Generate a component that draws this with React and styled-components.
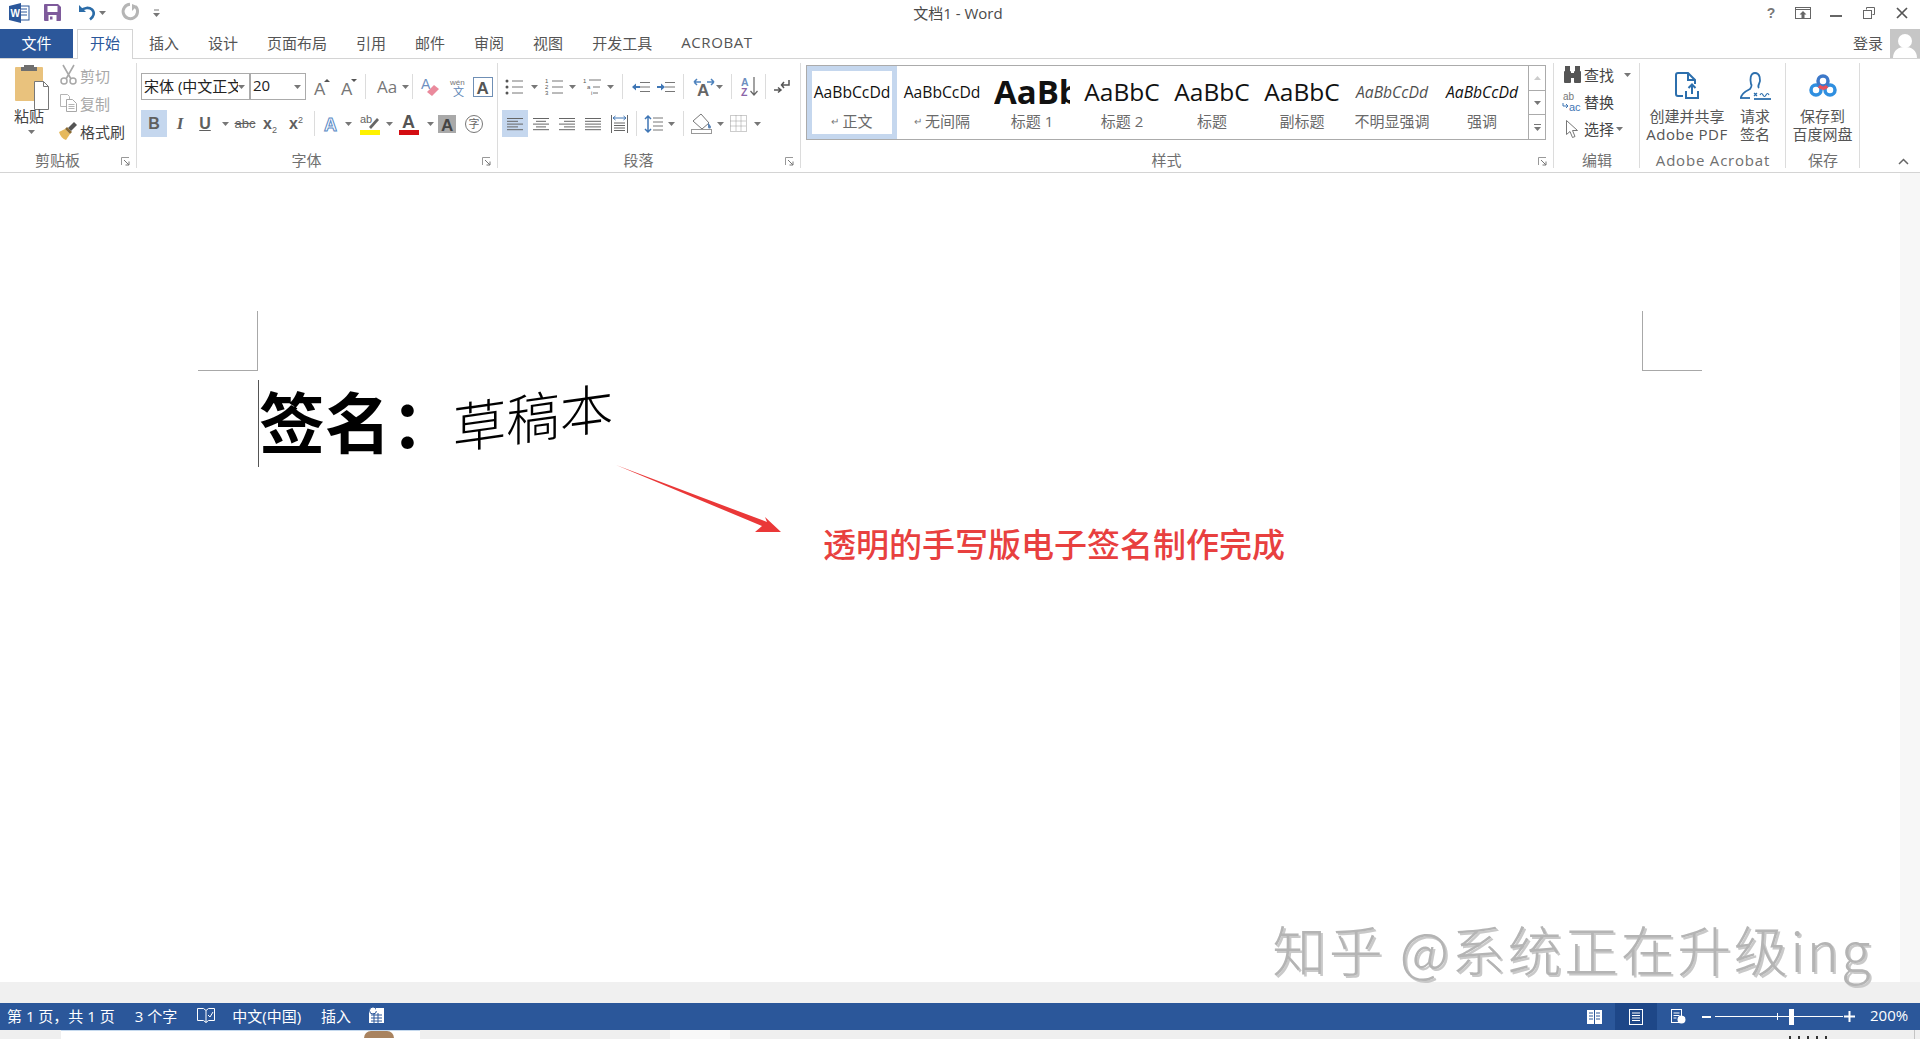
import React from 'react'
import styled, { createGlobalStyle } from 'styled-components'

const UI_FONT = '"Open Sans", "Noto Sans CJK SC", sans-serif'
const CJK_FONT = '"Noto Sans CJK SC", sans-serif'

const Global = createGlobalStyle`
 html, body {
  margin: 0;
  padding: 0;
  background: #fff;
 }
 body {
  font-family: ${UI_FONT};
  color: #444;
  overflow: hidden;
 }
`

const Window = styled.div`
 width: 1920px;
 height: 1039px;
 display: flex;
 flex-direction: column;
 overflow: hidden;
`

const TitleBar = styled.div`
 height: 29px;
 flex: none;
 box-sizing: border-box;
 padding-bottom: 4px;
 display: grid;
 grid-template-columns: 1fr auto 1fr;
 align-items: center;
`

const QuickAccess = styled.div`
 display: flex;
 align-items: center;
 height: 100%;
 padding-left: 7px;
`

const Title = styled.div`
 font-size: 15px;
 color: #4a4a4a;
 padding-right: 4px;
`

const WindowButtons = styled.div`
 display: flex;
 justify-content: flex-end;
 align-items: center;
 height: 100%;
 padding-right: 1px;
`

const TabBar = styled.div`
 height: 30px;
 flex: none;
 box-sizing: border-box;
 display: flex;
 border-bottom: 1px solid #d4d4d4;
`

const FileTab = styled.div`
 width: 73px;
 height: 29px;
 box-sizing: border-box;
 padding-bottom: 3px;
 margin-right: 4px;
 background: #2b579a;
 color: #fff;
 font-size: 15px;
 display: flex;
 align-items: center;
 justify-content: center;
`

const Tab = styled.div`
 height: ${(p) => (p.$active ? '30px' : '29px')};
 box-sizing: border-box;
 padding: 0 ${(p) => (p.$active ? '12px' : '14.5px')} ${(p) => (p.$active ? '4px' : '3px')};
 margin-right: ${(p) => (p.$active ? '1.5px' : '0')};
 font-size: 15px;
 color: ${(p) => (p.$active ? '#2b579a' : '#555')};
 background: #fff;
 border: ${(p) => (p.$active ? '1px solid #d4d4d4' : 'none')};
 border-bottom: none;
 display: flex;
 align-items: center;
 letter-spacing: ${(p) => p.$track || 0}px;
`

const Account = styled.div`
 margin-left: auto;
 display: flex;
 align-items: center;
 gap: 7px;
 font-size: 15px;
 color: #555;
`

const AccountName = styled.span`
 padding-bottom: 3px;
`

const Avatar = styled.div`
 width: 30px;
 height: 29px;
 background: #c6c6c6;
 overflow: hidden;
`

const Ribbon = styled.div`
 height: 114px;
 flex: none;
 box-sizing: border-box;
 display: flex;
 border-bottom: 1px solid #d4d4d4;
`

const Group = styled.div`
 position: relative;
 width: ${(p) => p.$w}px;
 flex: none;
 display: flex;
 flex-direction: column;
 &::after {
  content: '';
  position: absolute;
  right: 0;
  top: 4px;
  bottom: 4px;
  width: 1px;
  background: #dcdcdc;
 }
`

const GroupBody = styled.div`
 height: 92px;
 flex: none;
 box-sizing: border-box;
 display: flex;
 flex-direction: ${(p) => p.$dir || 'row'};
 gap: ${(p) => p.$gap || 0}px;
 padding: ${(p) => p.$pad || '0'};
`

const GroupLabel = styled.div`
 height: 20px;
 line-height: 19px;
 text-align: center;
 font-size: 15px;
 color: #707070;
 padding-right: ${(p) => (p.$launch ? 22 : 0)}px;
 letter-spacing: ${(p) => p.$track || 0}px;
`

const Launcher = styled.svg`
 position: absolute;
 right: 7px;
 bottom: 6px;
`

const PasteColumn = styled.div`
 width: 56px;
 flex: none;
 display: flex;
 flex-direction: column;
 align-items: flex-start;
 padding: 5px 0 0 15px;
 box-sizing: border-box;
`

const PasteLabel = styled.div`
 font-size: 15px;
 line-height: 20px;
 margin: -4px 0 0 -1px;
 color: #444;
`

const PasteCaret = styled.div`
 margin: 4px 0 0 13px;
 display: flex;
`

const SmallColumn = styled.div`
 display: flex;
 flex-direction: column;
 padding-top: ${(p) => p.$top || 0}px;
`

const SmallRow = styled.div`
 height: ${(p) => p.$h || 28}px;
 display: flex;
 align-items: center;
 font-size: 15px;
 color: ${(p) => (p.$off ? '#a8a8a8' : '#444')};
`

const SmallIcon = styled.div`
 width: ${(p) => p.$w}px;
 flex: none;
 display: flex;
 align-items: center;
 justify-content: center;
`

const ToolRow = styled.div`
 height: 27px;
 display: flex;
 align-items: stretch;
`

const Tool = styled.div`
 width: ${(p) => p.$w}px;
 margin-left: ${(p) => p.$ml || 0}px;
 flex: none;
 display: flex;
 align-items: center;
 justify-content: center;
 background: ${(p) => (p.$on ? '#c5d7ee' : 'transparent')};
`

const Select = styled.div`
 width: ${(p) => p.$w}px;
 margin-left: ${(p) => p.$ml || 0}px;
 box-sizing: border-box;
 flex: none;
 display: flex;
 align-items: center;
 justify-content: space-between;
 border: 1px solid #ababab;
 padding: 0 4px 0 2px;
 font-size: 15px;
 color: #222;
 overflow: hidden;
`

const SelectText = styled.span`
 white-space: nowrap;
 overflow: hidden;
 flex: 1;
 padding-bottom: 3px;
`

const Sep = styled.div`
 width: 1px;
 flex: none;
 margin: 1px 0 1px ${(p) => p.$ml || 0}px;
 background: #dcdcdc;
`

const Glyph = styled.span`
 font-family: ${(p) => p.$font || '"Liberation Sans", sans-serif'};
 font-size: ${(p) => p.$size || 16}px;
 font-weight: ${(p) => p.$weight || 400};
 font-style: ${(p) => p.$italic ? 'italic' : 'normal'};
 text-decoration: ${(p) => p.$deco || 'none'};
 color: ${(p) => p.$color || '#5f5f5f'};
 line-height: 1;
 sub, sup {
  font-size: 9px;
  font-weight: 400;
  line-height: 0;
 }
`

const Icon = styled.svg`
 display: block;
 flex: none;
 overflow: visible;
 text {
  font-family: "Liberation Sans", "Noto Sans CJK SC", sans-serif;
 }
`

const Gallery = styled.div`
 height: 75px;
 margin: 6px 0 0 5px;
 width: 722px;
 box-sizing: border-box;
 display: flex;
 border: 1px solid #ababab;
 border-right: none;
`

const StyleItem = styled.div`
 width: 90px;
 flex: none;
 box-sizing: border-box;
 overflow: hidden;
 display: flex;
 flex-direction: column;
 align-items: center;
 border: 5px solid ${(p) => (p.$active ? '#c5d7ee' : 'transparent')};
`

const StylePreview = styled.div`
 height: 41px;
 width: ${(p) => (p.$clip ? '76px' : '80px')};
 overflow: hidden;
 display: flex;
 align-items: center;
 justify-content: ${(p) => (p.$clip ? 'flex-start' : 'center')};
 white-space: nowrap;
 color: #111;
 font-size: ${(p) => p.$size}px;
 font-weight: ${(p) => p.$weight || 400};
 font-style: ${(p) => (p.$italic ? 'italic' : 'normal')};
 opacity: ${(p) => p.$dim || 1};
`

const StyleName = styled.div`
 font-size: 15px;
 color: #6a6a6a;
 line-height: 18px;
 white-space: nowrap;
 display: flex;
 align-items: center;
 gap: 3px;
`

const ReturnMark = styled.span`
 font-size: 10px;
 color: #777;
`

const GalleryScroll = styled.div`
 width: 18px;
 flex: none;
 display: flex;
 flex-direction: column;
 border: 1px solid #ababab;
 box-sizing: border-box;
 margin-top: 6px;
 height: 75px;
`

const ScrollCell = styled.div`
 flex: 1;
 display: flex;
 align-items: center;
 justify-content: center;
 border-top: ${(p) => (p.$first ? 'none' : '1px solid #ababab')};
`

const GalleryWrap = styled.div`
 display: flex;
`

const LargeButton = styled.div`
 width: ${(p) => p.$w}px;
 flex: none;
 box-sizing: border-box;
 padding-top: 12px;
 display: flex;
 flex-direction: column;
 align-items: center;
`

const LargeIcon = styled.div`
 height: 30px;
 margin-bottom: 6px;
 display: flex;
 align-items: center;
`

const LargeLine = styled.div`
 font-size: 15px;
 line-height: 18px;
 color: #555;
 white-space: nowrap;
 letter-spacing: ${(p) => p.$track || 0}px;
`

const RibbonTail = styled.div`
 flex: 1;
 display: flex;
 justify-content: flex-end;
 align-items: flex-end;
 padding: 0 11px 7px 0;
`

const DocArea = styled.div`
 position: relative;
 height: 809px;
 flex: none;
 display: flex;
`

const Canvas = styled.div`
 flex: 1;
 background: #fff;
 box-sizing: border-box;
 padding: 138px 0 0 198px;
`

const ScrollStrip = styled.div`
 width: 20px;
 flex: none;
 background: #f7f7f7;
`

const MarginRow = styled.div`
 width: 1504px;
 display: flex;
 justify-content: space-between;
`

const CropMark = styled.div`
 width: 60px;
 height: 60px;
 box-sizing: border-box;
 border-bottom: 1px solid #a8a8a8;
 border-${(p) => (p.$side === 'left' ? 'right' : 'left')}: 1px solid #a8a8a8;
`

const SignatureLine = styled.div`
 margin: 9px 0 0 60px;
 height: 87px;
 box-sizing: border-box;
 border-left: 1px solid #555;
 display: flex;
 align-items: center;
 font-family: ${CJK_FONT};
 color: #000;
`

const Printed = styled.span`
 font-size: 66px;
 font-weight: 700;
 line-height: 1;
 margin-top: -10px;
`

const Handwritten = styled.span`
 font-size: 54px;
 font-weight: 300;
 line-height: 1;
 margin: -18px 0 0 -5px;
 transform: rotate(-8deg) skewX(-8deg);
`

const AnnotationRow = styled.div`
 display: flex;
 margin: -2px 0 0 418px;
`

const Note = styled.div`
 margin: 54px 0 0 42px;
 font-family: ${CJK_FONT};
 font-size: 33px;
 font-weight: 500;
 line-height: 48px;
 color: #e8403f;
 white-space: nowrap;
`

const Watermark = styled.div`
 position: absolute;
 right: 47px;
 bottom: -2px;
 font-family: ${CJK_FONT};
 font-size: 54px;
 font-weight: 300;
 line-height: 70px;
 letter-spacing: 2.5px;
 color: #b4b4b4;
 white-space: pre;
 text-shadow: 2px 2px 0 #c9c9c9;
`

const GreyBand = styled.div`
 height: 21px;
 flex: none;
 background: #f0f0f0;
`

const StatusBar = styled.div`
 height: 27px;
 flex: none;
 box-sizing: border-box;
 background: #2b579a;
 color: #fff;
 font-size: 15px;
 display: flex;
 align-items: center;
 padding: 0 0 0 7px;
`

const StatusText = styled.span`
 margin-left: ${(p) => p.$ml || 0}px;
 margin-right: ${(p) => p.$mr}px;
 margin-top: -3px;
 white-space: pre;
`

const StatusGlyph = styled.div`
 margin-top: -3px;
`

const StatusRight = styled.div`
 margin-left: auto;
 height: 100%;
 display: flex;
 align-items: center;
`

const ViewButton = styled.div`
 width: 42px;
 height: 100%;
 display: flex;
 align-items: center;
 justify-content: center;
 background: ${(p) => (p.$on ? '#1e4788' : 'transparent')};
`

const ZoomSlider = styled.div`
 width: 128px;
 height: 1px;
 background: #fff;
 margin-left: 3px;
 display: flex;
 justify-content: flex-end;
 align-items: center;
 gap: 11px;
 padding-right: 49px;
 box-sizing: border-box;
`

const SliderTick = styled.div`
 width: 1px;
 height: 7px;
 background: #fff;
`

const SliderThumb = styled.div`
 width: 5px;
 height: 16px;
 background: #fff;
`

const ZoomValue = styled.div`
 width: 65px;
 padding: 0 0 3px 15px;
 box-sizing: border-box;
`

const BottomStrip = styled.div`
 flex: 1;
 background: #efefef;
 display: flex;
`

const Sheet = styled.div`
 position: relative;
 width: ${(p) => p.$w}px;
 margin-left: ${(p) => p.$ml}px;
 background: ${(p) => p.$bg || '#fff'};
 border-top: ${(p) => (p.$edge ? '1px solid #c5d9ee' : 'none')};
`

const Blob = styled.div`
 position: absolute;
 left: 303px;
 top: 0;
 width: 30px;
 height: 7px;
 border-radius: 15px 15px 0 0;
 background: #a9835f;
`

const CutText = styled.div`
 width: 38px;
 margin-left: 1059px;
 height: 3px;
 align-self: flex-end;
 background: repeating-linear-gradient(90deg, #333 0 2px, transparent 2px 9px);
`

const EdgeLine = styled.div`
 width: 1px;
 margin-left: 87px;
 background: #c4c4c4;
`

const Caret = ({ w = 8, color = '#777' }) => (
 <Tool $w={w}>
  <Icon width="7" height="4" viewBox="0 0 7 4">
   <path d="M0 0h7L3.5 4z" fill={color} />
  </Icon>
 </Tool>
)

const LaunchMark = () => (
 <Launcher width="9" height="9" viewBox="0 0 9 9">
  <path d="M.5 8V.5H8" fill="none" stroke="#999" />
  <path d="M3 3l5 5M8 4.500V8H4.500" fill="none" stroke="#777" />
 </Launcher>
)

const ListLines = ({ x = 7, rows = [3, 9, 15], w = 11, color = '#777' }) =>
 rows.map((y) => <path key={y} d={`M${x} ${y}h${w}`} stroke={color} />)

const AlignIcon = ({ rows }) => (
 <Icon width="16" height="14" viewBox="0 0 16 14">
  {rows.map(([x, w], i) => (
   <path key={i} d={`M${x} ${1.5 + i * 2.8}h${w}`} stroke="#666" />
  ))}
 </Icon>
)

const WordIcon = () => (
 <Icon width="21" height="20" viewBox="0 0 21 20">
  <rect x="9" y="3" width="11" height="14" fill="#fff" stroke="#2b579a" />
  <path d="M12 6h6M12 9h6M12 12h6" stroke="#2b579a" />
  <path d="M0 3L12 0v20L0 17z" fill="#2b579a" />
  <text x="1.500" y="13.500" fontSize="10" fontWeight="700" fill="#fff">W</text>
 </Icon>
)

const SaveIcon = () => (
 <Icon width="17" height="17" viewBox="0 0 17 17">
  <path d="M0 1a1 1 0 011-1h13l3 3v13a1 1 0 01-1 1H1a1 1 0 01-1-1z" fill="#7e5a9b" />
  <rect x="3.500" y="2" width="10" height="6" fill="#fff" />
  <rect x="4.500" y="11" width="8" height="6" fill="#fff" />
  <rect x="6" y="12.500" width="2.500" height="3" fill="#7e5a9b" />
 </Icon>
)

const UndoIcon = () => (
 <Icon width="18" height="17" viewBox="0 0 18 17">
  <path d="M1 1v7h7z" fill="#2b6ca8" />
  <path d="M3 6.500c3-3 8-3.500 11-1 3 3 2 7-2 10" fill="none" stroke="#2b6ca8" strokeWidth="2.600" />
 </Icon>
)

const RedoIcon = () => (
 <Icon width="17" height="18" viewBox="0 0 17 18">
  <path d="M11 1a7.200 7.200 0 11-6-.2" fill="none" stroke="#b5b5b5" strokeWidth="3" transform="rotate(20 8 9)" />
  <path d="M10 0v7l5-5z" fill="#b5b5b5" />
 </Icon>
)

const PasteIcon = () => (
 <Icon width="35" height="46" viewBox="0 0 35 46">
  <rect x="0" y="3" width="28" height="34" rx="1" fill="#e9c27d" />
  <path d="M9 3V1h10v2h3v4H6V3z" fill="#6f6f6f" />
  <path d="M19.500 17.500h9l5 5v23h-14z" fill="#fff" stroke="#777" />
  <path d="M28.500 17.500v5h5" fill="none" stroke="#777" />
 </Icon>
)

const ScissorsIcon = () => (
 <Icon width="17" height="20" viewBox="0 0 17 20">
  <path d="M3 0l8 14M14 0L6 14" stroke="#a8a8a8" strokeWidth="1.600" />
  <circle cx="4" cy="16" r="3" fill="none" stroke="#a8a8a8" strokeWidth="1.500" />
  <circle cx="13" cy="16" r="3" fill="none" stroke="#a8a8a8" strokeWidth="1.500" />
 </Icon>
)

const CopyIcon = () => (
 <Icon width="17" height="18" viewBox="0 0 17 18">
  <path d="M.5.500h7l2 2v10H.5z" fill="#fff" stroke="#b5b5b5" />
  <path d="M6.500 5.500h6l4 4v8h-10z" fill="#fff" stroke="#a8a8a8" />
  <path d="M8.500 10.500h6M8.500 12.500h6M8.500 14.500h6" stroke="#b5b5b5" />
 </Icon>
)

const BrushIcon = () => (
 <Icon width="18" height="18" viewBox="0 0 18 18">
  <path d="M0 10l6-3 5 5-4 6c-3-1-6-4-7-8z" fill="#e6b95c" />
  <path d="M6 7l2-2 5 5-2 2z" fill="#8a6a32" />
  <path d="M9 6l6-6 3 3-6 6z" fill="#555" />
 </Icon>
)

const EraserIcon = () => (
 <Icon width="18" height="20" viewBox="0 0 18 20">
  <text x="0" y="12" fontSize="14" fill="#6d8fbf">A</text>
  <path d="M6 15l7-7 5 4-7 7z" fill="#ea8a9c" />
 </Icon>
)

const AZIcon = () => (
 <Icon width="17" height="22" viewBox="0 0 17 22">
  <text x="0" y="10" fontSize="10.500" fontWeight="700" fill="#6d8fbf">A</text>
  <text x="0" y="20" fontSize="10.500" fontWeight="700" fill="#8a65a8">Z</text>
  <path d="M13 1v18M9.500 15l3.500 4 3.500-4" fill="none" stroke="#666" strokeWidth="1.200" />
 </Icon>
)

const App = () => (
 <Window>
  <Global />
  <TitleBar>
   <QuickAccess>
    <Tool $w={24}><WordIcon /></Tool>
    <Tool $w={11} />
    <Tool $w={21}><SaveIcon /></Tool>
    <Tool $w={13} />
    <Tool $w={22}><UndoIcon /></Tool>
    <Caret w={9} />
    <Tool $w={14} />
    <Tool $w={19}><RedoIcon /></Tool>
    <Tool $w={10} />
    <Tool $w={12}>
     <Icon width="7" height="8" viewBox="0 0 7 8">
      <path d="M1 1h5" stroke="#777" />
      <path d="M0 4h7L3.500 8z" fill="#777" />
     </Icon>
    </Tool>
   </QuickAccess>
   <Title>文档1 - Word</Title>
   <WindowButtons>
    <Tool $w={32}><Glyph $size={14} $weight={700} $color="#777">?</Glyph></Tool>
    <Tool $w={32}>
     <Icon width="16" height="12" viewBox="0 0 16 12">
      <rect x=".5" y=".5" width="15" height="11" fill="none" stroke="#666" />
      <path d="M1 2.500h14" stroke="#666" />
      <path d="M8 4l3.500 3.500h-2V11h-3V7.500h-2z" fill="#666" />
     </Icon>
    </Tool>
    <Tool $w={34}>
     <Icon width="12" height="12" viewBox="0 0 12 12"><path d="M0 9h12" stroke="#666" strokeWidth="2" /></Icon>
    </Tool>
    <Tool $w={32}>
     <Icon width="12" height="12" viewBox="0 0 12 12">
      <path d="M3.500 2.500v-2h8v7h-2" fill="none" stroke="#666" />
      <rect x=".5" y="3.500" width="8" height="8" fill="#fff" stroke="#666" />
     </Icon>
    </Tool>
    <Tool $w={34}>
     <Icon width="12" height="12" viewBox="0 0 12 12"><path d="M1 1l10 10M11 1L1 11" stroke="#555" strokeWidth="1.700" /></Icon>
    </Tool>
   </WindowButtons>
  </TitleBar>

  <TabBar>
   <FileTab>文件</FileTab>
   <Tab $active>开始</Tab>
   <Tab>插入</Tab>
   <Tab>设计</Tab>
   <Tab>页面布局</Tab>
   <Tab>引用</Tab>
   <Tab>邮件</Tab>
   <Tab>审阅</Tab>
   <Tab>视图</Tab>
   <Tab>开发工具</Tab>
   <Tab $track={0.6}>ACROBAT</Tab>
   <Account>
    <AccountName>登录</AccountName>
    <Avatar>
     <Icon width="30" height="29" viewBox="0 0 30 29">
      <circle cx="15" cy="12" r="7" fill="#fff" />
      <path d="M3 29c0-8 6-11 12-11s12 3 12 11z" fill="#fff" />
     </Icon>
    </Avatar>
   </Account>
  </TabBar>

  <Ribbon>
   <Group $w={137}>
    <GroupBody>
     <PasteColumn>
      <PasteIcon />
      <PasteLabel>粘贴</PasteLabel>
      <PasteCaret>
       <Icon width="7" height="4" viewBox="0 0 7 4"><path d="M0 0h7L3.500 4z" fill="#777" /></Icon>
      </PasteCaret>
     </PasteColumn>
     <SmallColumn $top={2}>
      <SmallRow $off><SmallIcon $w={24}><ScissorsIcon /></SmallIcon>剪切</SmallRow>
      <SmallRow $off><SmallIcon $w={24}><CopyIcon /></SmallIcon>复制</SmallRow>
      <SmallRow><SmallIcon $w={24}><BrushIcon /></SmallIcon>格式刷</SmallRow>
     </SmallColumn>
    </GroupBody>
    <GroupLabel $launch>剪贴板</GroupLabel>
    <LaunchMark />
   </Group>

   <Group $w={361}>
    <GroupBody $dir="column" $gap={10} $pad="14px 0 0 4px">
     <ToolRow>
      <Select $w={109}>
       <SelectText>宋体 (中文正文)</SelectText>
       <Icon width="7" height="4" viewBox="0 0 7 4"><path d="M0 0h7L3.500 4z" fill="#777" /></Icon>
      </Select>
      <Select $w={56}>
       <SelectText>20</SelectText>
       <Icon width="7" height="4" viewBox="0 0 7 4"><path d="M0 0h7L3.500 4z" fill="#777" /></Icon>
      </Select>
      <Tool $w={28} $ml={2}>
       <Icon width="16" height="18" viewBox="0 0 16 18">
        <text x="0" y="17" fontSize="17" fill="#777">A</text>
        <path d="M10 4l3-3 3 3z" fill="#555" />
       </Icon>
      </Tool>
      <Tool $w={26}>
       <Icon width="16" height="18" viewBox="0 0 16 18">
        <text x="0" y="17" fontSize="17" fill="#777">A</text>
        <path d="M10 1h6l-3 3z" fill="#555" />
       </Icon>
      </Tool>
      <Sep $ml={3} />
      <Tool $w={30} $ml={6}><Glyph $size={17} $color="#777" $font={UI_FONT}>Aa</Glyph></Tool>
      <Caret w={7} />
      <Sep $ml={3} />
      <Tool $w={34}><EraserIcon /></Tool>
      <Tool $w={22}>
       <Icon width="17" height="20" viewBox="0 0 17 20">
        <text x="0" y="8" fontSize="8" fill="#777">wén</text>
        <text x="3" y="19" fontSize="11" fill="#5a83b5">文</text>
       </Icon>
      </Tool>
      <Tool $w={28}>
       <Icon width="20" height="20" viewBox="0 0 20 20">
        <rect x=".5" y=".5" width="19" height="19" fill="none" stroke="#6f8fb5" />
        <text x="3.500" y="16.500" fontSize="17" fontWeight="700" fill="#555">A</text>
       </Icon>
      </Tool>
     </ToolRow>
     <ToolRow>
      <Tool $w={26} $on><Glyph $weight={700}>B</Glyph></Tool>
      <Tool $w={26}><Glyph $weight={700} $italic $size={17} $font='"Liberation Serif", serif'>I</Glyph></Tool>
      <Tool $w={24}><Glyph $weight={700} $deco="underline">U</Glyph></Tool>
      <Caret w={16} />
      <Tool $w={24}><Glyph $size={13} $deco="line-through">abc</Glyph></Tool>
      <Tool $w={26}><Glyph $weight={700}>x<sub>2</sub></Glyph></Tool>
      <Tool $w={26}><Glyph $weight={700}>x<sup>2</sup></Glyph></Tool>
      <Sep $ml={5} />
      <Tool $w={20} $ml={7}>
       <Icon width="18" height="18" viewBox="0 0 18 18">
        <text x="1" y="16" fontSize="18" fontWeight="700" fill="#fff" stroke="#5a8ac6">A</text>
       </Icon>
      </Tool>
      <Caret w={12} />
      <Tool $w={32}>
       <Icon width="20" height="22" viewBox="0 0 20 22">
        <text x="0" y="10" fontSize="11" fill="#666">ab</text>
        <path d="M9 14l8-9 2 2-8 9z" fill="#666" />
        <rect x="0" y="17" width="20" height="5" fill="#fff200" />
       </Icon>
      </Tool>
      <Caret w={6} />
      <Tool $w={34}>
       <Icon width="20" height="22" viewBox="0 0 20 22">
        <text x="3" y="15" fontSize="18" fontWeight="700" fill="#555">A</text>
        <rect x="0" y="17" width="20" height="5" fill="#d40d12" />
       </Icon>
      </Tool>
      <Caret w={8} />
      <Tool $w={26}>
       <Icon width="18" height="18" viewBox="0 0 18 18">
        <rect width="18" height="18" fill="#a9a9a9" />
        <text x="3" y="16" fontSize="17" fontWeight="700" fill="#444">A</text>
       </Icon>
      </Tool>
      <Tool $w={28}>
       <Icon width="18" height="18" viewBox="0 0 18 18">
        <circle cx="9" cy="9" r="8.500" fill="none" stroke="#777" />
        <text x="3.500" y="13" fontSize="11" fill="#666">字</text>
       </Icon>
      </Tool>
     </ToolRow>
    </GroupBody>
    <GroupLabel $launch>字体</GroupLabel>
    <LaunchMark />
   </Group>

   <Group $w={303}>
    <GroupBody $dir="column" $gap={10} $pad="14px 0 0 4px">
     <ToolRow>
      <Tool $w={24}>
       <Icon width="19" height="18" viewBox="0 0 19 18">
        <ListLines />
        <circle cx="2" cy="3" r="1.500" fill="#555" />
        <circle cx="2" cy="9" r="1.500" fill="#555" />
        <circle cx="2" cy="15" r="1.500" fill="#555" />
       </Icon>
      </Tool>
      <Caret w={16} />
      <Tool $w={24}>
       <Icon width="19" height="18" viewBox="0 0 19 18">
        <ListLines />
        <text x="0" y="5" fontSize="6" fill="#555">1</text>
        <text x="0" y="11" fontSize="6" fill="#555">2</text>
        <text x="0" y="17" fontSize="6" fill="#555">3</text>
       </Icon>
      </Tool>
      <Caret w={12} />
      <Tool $w={28}>
       <Icon width="19" height="18" viewBox="0 0 19 18">
        <path d="M6 2h12M10 9h7M10 15h5" stroke="#777" />
        <text x="0" y="5" fontSize="6" fill="#555">1</text>
        <text x="4" y="11" fontSize="6" fill="#555">a</text>
        <text x="8" y="17" fontSize="6" fill="#555">i</text>
       </Icon>
      </Tool>
      <Caret w={8} />
      <Sep $ml={8} />
      <Tool $w={28} $ml={4}>
       <Icon width="18" height="12" viewBox="0 0 18 12">
        <path d="M8 1.500h10M8 6h10M8 10.500h10" stroke="#777" />
        <path d="M0 6l4-3.500V5h4v2H4v2.500z" fill="#3f76b5" />
       </Icon>
      </Tool>
      <Tool $w={22}>
       <Icon width="18" height="12" viewBox="0 0 18 12">
        <path d="M8 1.500h10M8 6h10M8 10.500h10" stroke="#777" />
        <path d="M8 6L4 2.500V5H0v2h4v2.500z" fill="#3f76b5" />
       </Icon>
      </Tool>
      <Sep $ml={6} />
      <Tool $w={24} $ml={8}>
       <Icon width="22" height="18" viewBox="0 0 22 18">
        <path d="M1 4h7M14 4h7M1 4l3-3M1 4l3 3M21 4l-3-3M21 4l-3 3" fill="none" stroke="#4d82bd" strokeWidth="1.500" />
        <text x="4" y="18" fontSize="17" fontWeight="700" fill="#666">A</text>
       </Icon>
      </Tool>
      <Caret w={6} />
      <Sep $ml={9} />
      <Tool $w={24} $ml={5}><AZIcon /></Tool>
      <Sep $ml={4} />
      <Tool $w={32}>
       <Icon width="16" height="16" viewBox="0 0 16 16">
        <path d="M15 1v5H8M10 3L7.500 6 10 9" fill="none" stroke="#555" strokeWidth="1.500" />
        <path d="M0 11h6M4 8.500L7 11l-3 2.500" fill="none" stroke="#555" strokeWidth="1.500" />
       </Icon>
      </Tool>
     </ToolRow>
     <ToolRow>
      <Tool $w={26} $on><AlignIcon rows={[[0, 16], [0, 11], [0, 16], [0, 11], [0, 16]]} /></Tool>
      <Tool $w={26}><AlignIcon rows={[[0, 16], [3, 10], [0, 16], [3, 10], [0, 16]]} /></Tool>
      <Tool $w={26}><AlignIcon rows={[[0, 16], [5, 11], [0, 16], [5, 11], [0, 16]]} /></Tool>
      <Tool $w={26}><AlignIcon rows={[[0, 16], [0, 16], [0, 16], [0, 16], [0, 16]]} /></Tool>
      <Tool $w={26}>
       <Icon width="17" height="18" viewBox="0 0 17 18">
        <path d="M.5 0v18M16.500 0v18" stroke="#666" />
        <path d="M2 3h13M2 3l2.500-2M2 3l2.500 2M15 3l-2.500-2M15 3l-2.500 2" fill="none" stroke="#3f76b5" />
        <path d="M3 8h11M3 10.500h11M3 13h11M3 15.500h11" stroke="#666" />
       </Icon>
      </Tool>
      <Sep $ml={4} />
      <Tool $w={28} $ml={3}>
       <Icon width="18" height="18" viewBox="0 0 18 18">
        <path d="M8 3h10M8 7h10M8 11h10M8 15h10" stroke="#777" />
        <path d="M3 1v16M0 4l3-3 3 3M0 14l3 3 3-3" fill="none" stroke="#3f76b5" strokeWidth="1.500" />
       </Icon>
      </Tool>
      <Caret w={6} />
      <Sep $ml={9} />
      <Tool $w={34}>
       <Icon width="21" height="20" viewBox="0 0 21 20">
        <path d="M10 0l8 9-7 6-9-8z" fill="#fff" stroke="#777" />
        <path d="M17 9c2 2 3 3 3 4a1.500 1.500 0 01-3 0z" fill="#5a83b5" />
        <rect x=".5" y="15.500" width="20" height="4" fill="#fff" stroke="#999" />
       </Icon>
      </Tool>
      <Caret w={4} />
      <Tool $w={32}>
       <Icon width="17" height="17" viewBox="0 0 17 17">
        <path d="M.5.500h16v16H.5zM.5 6h16M.5 11h16M6 .5v16M11 .5v16" fill="none" stroke="#999" strokeDasharray="1 1" />
       </Icon>
      </Tool>
      <Caret w={6} />
     </ToolRow>
    </GroupBody>
    <GroupLabel $launch>段落</GroupLabel>
    <LaunchMark />
   </Group>

   <Group $w={753}>
    <GroupBody>
     <GalleryWrap>
      <Gallery>
       <StyleItem $active>
        <StylePreview $size={15.7}>AaBbCcDd</StylePreview>
        <StyleName><ReturnMark>↵</ReturnMark>正文</StyleName>
       </StyleItem>
       <StyleItem>
        <StylePreview $size={15.7}>AaBbCcDd</StylePreview>
        <StyleName><ReturnMark>↵</ReturnMark>无间隔</StyleName>
       </StyleItem>
       <StyleItem>
        <StylePreview $size={33} $weight={700} $clip>AaBb</StylePreview>
        <StyleName>标题 1</StyleName>
       </StyleItem>
       <StyleItem>
        <StylePreview $size={24.5}>AaBbC</StylePreview>
        <StyleName>标题 2</StyleName>
       </StyleItem>
       <StyleItem>
        <StylePreview $size={24.5}>AaBbC</StylePreview>
        <StyleName>标题</StyleName>
       </StyleItem>
       <StyleItem>
        <StylePreview $size={24.5}>AaBbC</StylePreview>
        <StyleName>副标题</StyleName>
       </StyleItem>
       <StyleItem>
        <StylePreview $size={15.7} $italic $dim={0.75}>AaBbCcDd</StylePreview>
        <StyleName>不明显强调</StyleName>
       </StyleItem>
       <StyleItem>
        <StylePreview $size={15.7} $italic>AaBbCcDd</StylePreview>
        <StyleName>强调</StyleName>
       </StyleItem>
      </Gallery>
      <GalleryScroll>
       <ScrollCell $first>
        <Icon width="7" height="4" viewBox="0 0 7 4"><path d="M0 4h7L3.500 0z" fill="#ccc" /></Icon>
       </ScrollCell>
       <ScrollCell>
        <Icon width="7" height="4" viewBox="0 0 7 4"><path d="M0 0h7L3.500 4z" fill="#777" /></Icon>
       </ScrollCell>
       <ScrollCell>
        <Icon width="7" height="7" viewBox="0 0 7 7">
         <path d="M0 .5h7" stroke="#777" />
         <path d="M0 3h7L3.500 7z" fill="#777" />
        </Icon>
       </ScrollCell>
      </GalleryScroll>
     </GalleryWrap>
    </GroupBody>
    <GroupLabel $launch>样式</GroupLabel>
    <LaunchMark />
   </Group>

   <Group $w={86}>
    <GroupBody $pad="2px 0 0 6px">
     <SmallColumn>
      <SmallRow $h={27}>
       <SmallIcon $w={24}>
        <Icon width="19" height="17" viewBox="0 0 19 17">
         <rect x="2" y="0" width="5" height="6" fill="#555" />
         <rect x="12" y="0" width="5" height="6" fill="#555" />
         <rect x="1" y="5" width="7" height="12" rx="1" fill="#555" />
         <rect x="11" y="5" width="7" height="12" rx="1" fill="#555" />
         <rect x="8" y="7" width="3" height="5" fill="#555" />
        </Icon>
       </SmallIcon>
       查找
       <Caret w={26} />
      </SmallRow>
      <SmallRow $h={27}>
       <SmallIcon $w={24}>
        <Icon width="21" height="20" viewBox="0 0 21 20">
         <text x="1" y="8" fontSize="10" fill="#777">ab</text>
         <text x="7" y="19" fontSize="11" fill="#3f76b5">ac</text>
         <path d="M1 11v3h5M4 12l2 2-2 2" fill="none" stroke="#3f76b5" />
        </Icon>
       </SmallIcon>
       替换
      </SmallRow>
      <SmallRow $h={27}>
       <SmallIcon $w={24}>
        <Icon width="13" height="18" viewBox="0 0 13 18">
         <path d="M.5.500v14l3.500-3 2.500 6 2.500-1-2.500-6h5z" fill="#fff" stroke="#777" />
        </Icon>
       </SmallIcon>
       选择
       <Caret w={10} />
      </SmallRow>
     </SmallColumn>
    </GroupBody>
    <GroupLabel>编辑</GroupLabel>
   </Group>

   <Group $w={146}>
    <GroupBody $pad="0 0 0 4px">
     <LargeButton $w={86}>
      <LargeIcon>
       <Icon width="24" height="28" viewBox="0 0 24 28">
        <path d="M8 24H3a2 2 0 01-2-2V3a2 2 0 012-2h10l7 7v4" fill="none" stroke="#2c6fad" strokeWidth="2" />
        <path d="M13 1v7h7" fill="none" stroke="#2c6fad" strokeWidth="2" />
        <path d="M11 19v7h12v-7M17 22V13M13.500 16l3.500-3.500 3.500 3.500" fill="none" stroke="#2c6fad" strokeWidth="2" />
       </Icon>
      </LargeIcon>
      <LargeLine>创建并共享</LargeLine>
      <LargeLine $track={0.5}>Adobe PDF</LargeLine>
     </LargeButton>
     <LargeButton $w={50}>
      <LargeIcon>
       <Icon width="32" height="28" viewBox="0 0 32 28">
        <path d="M2 26c0-4 5-7 9-9 2-3 2-4 1-5-1-4-1-11 4-11s6 7 4 11c-1 2-1 3 0 4" fill="none" stroke="#2c6fad" strokeWidth="1.800" />
        <path d="M1 26h10" stroke="#2c6fad" strokeWidth="1.800" />
        <path d="M15 21l3 3M18 21l-3 3M21 23c1-2 2-2 3 0s2 2 3 0 2-2 3 0" fill="none" stroke="#2c6fad" strokeWidth="1.200" />
        <path d="M15 27h17" stroke="#2c6fad" strokeWidth="1.800" />
       </Icon>
      </LargeIcon>
      <LargeLine>请求</LargeLine>
      <LargeLine>签名</LargeLine>
     </LargeButton>
    </GroupBody>
    <GroupLabel $track={0.8}>Adobe Acrobat</GroupLabel>
   </Group>

   <Group $w={74}>
    <GroupBody>
     <LargeButton $w={73}>
      <LargeIcon>
       <Icon width="28" height="24" viewBox="0 0 28 24">
        <circle cx="7" cy="16" r="5" fill="none" stroke="#2f8fe0" strokeWidth="3.500" />
        <circle cx="21" cy="16" r="5" fill="none" stroke="#2f8fe0" strokeWidth="3.500" />
        <circle cx="14" cy="7" r="5" fill="none" stroke="#3d78c9" strokeWidth="3.500" />
        <path d="M10 12c3 3 6 3 8 0" fill="none" stroke="#e8505b" strokeWidth="3.500" />
       </Icon>
      </LargeIcon>
      <LargeLine>保存到</LargeLine>
      <LargeLine>百度网盘</LargeLine>
     </LargeButton>
    </GroupBody>
    <GroupLabel>保存</GroupLabel>
   </Group>

   <RibbonTail>
    <Icon width="11" height="7" viewBox="0 0 11 7"><path d="M1 6l4.500-4.500L10 6" fill="none" stroke="#666" strokeWidth="1.500" /></Icon>
   </RibbonTail>
  </Ribbon>

  <DocArea>
   <Canvas>
    <MarginRow>
     <CropMark $side="left" />
     <CropMark $side="right" />
    </MarginRow>
    <SignatureLine>
     <Printed>签名：</Printed>
     <Handwritten>草稿本</Handwritten>
    </SignatureLine>
    <AnnotationRow>
     <Icon width="165" height="70" viewBox="0 0 165 70">
      <path d="M0 0L151 57 149 52 165 67 139 67 146 61z" fill="#ea3838" />
     </Icon>
     <Note>透明的手写版电子签名制作完成</Note>
    </AnnotationRow>
   </Canvas>
   <ScrollStrip />
   <Watermark>知乎 @系统正在升级ing</Watermark>
  </DocArea>
  <GreyBand />

  <StatusBar>
   <StatusText $mr={20}>第 1 页，共 1 页</StatusText>
   <StatusText $mr={20}>3 个字</StatusText>
   <StatusGlyph>
    <Icon width="18" height="15" viewBox="0 0 18 15">
     <path d="M.5.500h6l2.500 2 2.500-2h6v12h-6l-2.500 2-2.500-2h-6zM9 2.500v12" fill="none" stroke="#fff" />
     <path d="M11 7l2 2 3-5" fill="none" stroke="#fff" />
    </Icon>
   </StatusGlyph>
   <StatusText $ml={17} $mr={20}>中文(中国)</StatusText>
   <StatusText $mr={18}>插入</StatusText>
   <StatusGlyph>
    <Icon width="15" height="16" viewBox="0 0 15 16">
     <rect y="4" width="15" height="12" fill="#fff" />
     <circle cx="4" cy="3.500" r="3.500" fill="#fff" stroke="#2b579a" />
     <rect x="7" y="1" width="8" height="3" fill="#fff" />
     <path d="M2 8h11M2 11h11M2 14h11M5 6v10M9 6v10" stroke="#2b579a" />
    </Icon>
   </StatusGlyph>
   <StatusRight>
    <ViewButton>
     <Icon width="15" height="14" viewBox="0 0 15 14">
      <path d="M0 0h15v14H0z" fill="#fff" />
      <path d="M7.500 0v14M2 3h4M2 6h4M2 9h4M9 3h4M9 6h4M9 9h4" stroke="#2b579a" />
     </Icon>
    </ViewButton>
    <ViewButton $on>
     <Icon width="14" height="16" viewBox="0 0 14 16">
      <rect x=".5" y=".5" width="13" height="15" fill="#1e4788" stroke="#fff" />
      <path d="M3 4h8M3 6.500h8M3 9h8M3 11.500h8" stroke="#fff" />
     </Icon>
    </ViewButton>
    <ViewButton>
     <Icon width="15" height="15" viewBox="0 0 15 15">
      <rect x=".5" y=".5" width="10" height="13" fill="none" stroke="#fff" />
      <path d="M2.500 4h6M2.500 6.500h6M2.500 9h3" stroke="#fff" />
      <circle cx="10.500" cy="10.500" r="4" fill="#fff" />
     </Icon>
    </ViewButton>
    <Tool $w={12} $ml={1}>
     <Icon width="9" height="2" viewBox="0 0 9 2"><path d="M0 1h9" stroke="#fff" strokeWidth="2" /></Icon>
    </Tool>
    <ZoomSlider>
     <SliderTick />
     <SliderThumb />
    </ZoomSlider>
    <Tool $w={12}>
     <Icon width="11" height="11" viewBox="0 0 11 11"><path d="M0 5.500h11M5.500 0v11" stroke="#fff" strokeWidth="2" /></Icon>
    </Tool>
    <ZoomValue>200%</ZoomValue>
   </StatusRight>
  </StatusBar>

  <BottomStrip>
   <Sheet $w={359} $ml={61} $edge><Blob /></Sheet>
   <Sheet $w={60} $ml={250} $bg="#f8f8f8" />
   <CutText />
   <EdgeLine />
  </BottomStrip>
 </Window>
)

export default App
